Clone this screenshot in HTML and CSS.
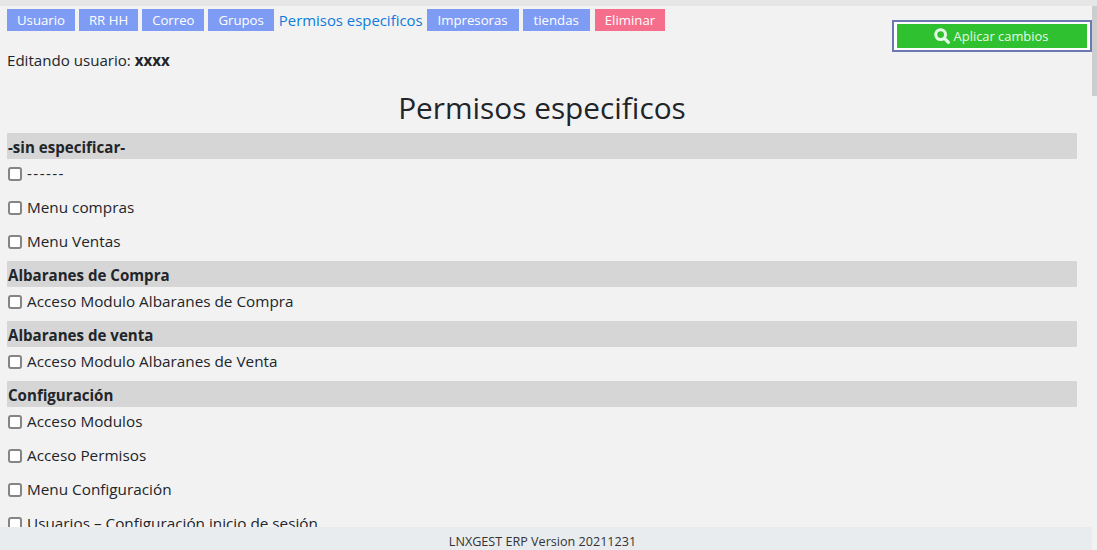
FILE: index.html
```html
<!DOCTYPE html>
<html lang="es">
<head>
    <meta charset="UTF-8">
    <meta name="viewport" content="width=device-width, initial-scale=1.0">
    <title>Permisos especificos</title>
    <link rel="stylesheet" href="styles.css">
</head>
<body>
    <div class="topstrip"></div>
    <div class="scrollthumb"></div>
    <div class="page">
        <div class="header">
            <div>
                <div class="tabs">
                    <a class="tab">Usuario</a>
                    <a class="tab">RR HH</a>
                    <a class="tab">Correo</a>
                    <a class="tab">Grupos</a>
                    <a class="tab-active">Permisos especificos</a>
                    <a class="tab tab-wide">Impresoras</a>
                    <a class="tab tab-wide">tiendas</a>
                    <a class="tab tab-danger">Eliminar</a>
                </div>
                <p class="editing">Editando usuario: <b>xxxx</b></p>
            </div>
            <div class="apply-wrap">
                <button class="apply">
                    <svg class="apply-icon" viewBox="0 0 16 16" width="16" height="16">
                        <circle cx="6.6" cy="6.6" r="4.9" fill="none" stroke="currentColor" stroke-width="3"/>
                        <path d="M10.4 10.4 L14.4 14.4" stroke="currentColor" stroke-width="3.2" stroke-linecap="round"/>
                    </svg>
                    Aplicar cambios
                </button>
            </div>
        </div>

        <h1>Permisos especificos</h1>

        <div class="group">-sin especificar-</div>
        <label class="perm"><input type="checkbox"> <span class="dashes">------</span></label>
        <label class="perm"><input type="checkbox"> Menu compras</label>
        <label class="perm"><input type="checkbox"> Menu Ventas</label>

        <div class="group">Albaranes de Compra</div>
        <label class="perm"><input type="checkbox"> Acceso Modulo Albaranes de Compra</label>

        <div class="group">Albaranes de venta</div>
        <label class="perm"><input type="checkbox"> Acceso Modulo Albaranes de Venta</label>

        <div class="group">Configuración</div>
        <label class="perm"><input type="checkbox"> Acceso Modulos</label>
        <label class="perm"><input type="checkbox"> Acceso Permisos</label>
        <label class="perm"><input type="checkbox"> Menu Configuración</label>
        <label class="perm"><input type="checkbox"> Usuarios – Configuración inicio de sesión</label>
    </div>

    <div class="footer">LNXGEST ERP Version 20211231</div>
</body>
</html>
```

FILE: styles.css
```css
html, body {
    height: 100%;
    overflow: hidden;
}
body {
    margin: 0;
    background-color: #f2f2f3;
    color: #212529;
    font-family: 'Open Sans', sans-serif;
    font-size: 15.3px;
}
.topstrip {
    height: 6px;
    background-color: #e6e6e6;
}
.scrollthumb {
    position: fixed;
    top: 6px;
    right: 0;
    width: 5px;
    height: 90px;
    background-color: #cdcdcd;
}
.page {
    padding: 0 20px 0 7px;
}
.header {
    display: flex;
    justify-content: space-between;
    align-items: flex-start;
    height: 85px;
    margin-right: -15px;
}
.tabs {
    display: flex;
    align-items: center;
    gap: 4px;
    margin-top: 3px;
}
.tab {
    padding: 0 10px;
    height: 22px;
    line-height: 23px;
    background-color: #7f9cf5;
    color: #fff;
    font-size: 13.2px;
}
.tab-wide {
    padding: 0 11px;
}
.tab-danger {
    margin-left: 1px;
    background-color: #f56f8c;
}
.tab-active {
    margin-left: 1px;
    color: #0d7bdc;
    font-size: 14.9px;
}
.editing {
    margin: 19px 0 0;
    font-size: 15.1px;
}
.apply-wrap {
    margin-top: 14px;
    border: 2px solid #6c78b0;
    background-color: #fff;
    padding: 2px 3px;
}
.apply {
    display: flex;
    align-items: center;
    justify-content: center;
    gap: 4px;
    width: 190px;
    height: 24px;
    padding: 0 2px 0 0;
    border: none;
    background-color: #2fc12f;
    color: #e6fbe6;
    font-family: inherit;
    font-size: 12.9px;
}
h1 {
    margin: 0;
    height: 42px;
    line-height: 34px;
    text-align: center;
    font-size: 29.8px;
    font-weight: 400;
}
.group {
    height: 26px;
    line-height: 29px;
    padding-left: 1px;
    background-color: #d6d6d6;
    font-size: 15.1px;
    font-weight: 700;
}
.perm {
    display: flex;
    align-items: center;
    gap: 5px;
    box-sizing: border-box;
    height: 34px;
    padding-bottom: 7px;
}
.perm input {
    appearance: none;
    width: 14px;
    height: 14px;
    margin: 2px 0 0 1px;
    background-color: #fff;
    border: 2px solid #858585;
    border-radius: 3px;
}
.dashes {
    letter-spacing: 1.4px;
}
.footer {
    position: fixed;
    left: 0;
    right: 5px;
    bottom: 0;
    height: 23px;
    line-height: 30px;
    padding-right: 7px;
    text-align: center;
    background-color: #e9ecef;
    font-size: 12.6px;
    color: #333;
}
```
